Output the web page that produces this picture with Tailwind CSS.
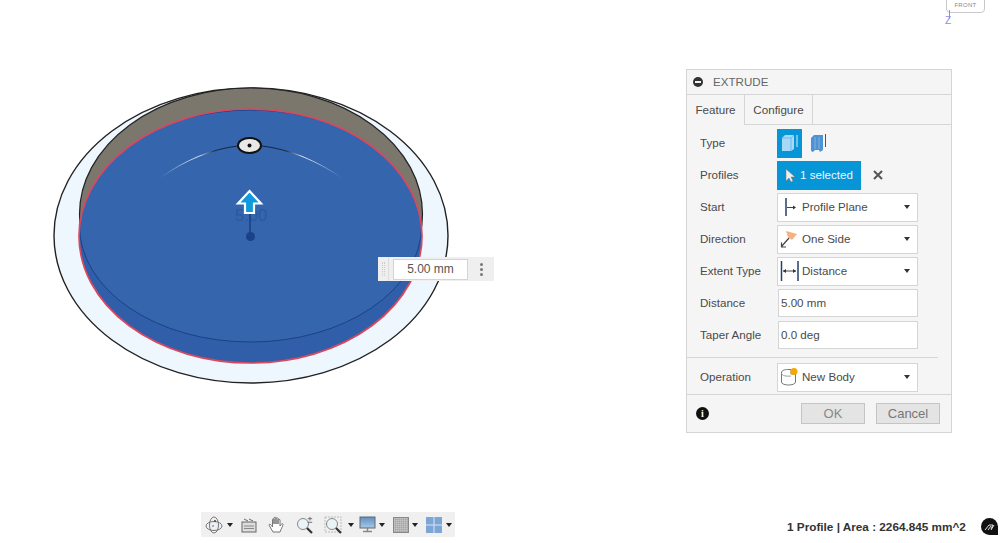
<!DOCTYPE html>
<html lang="en">
<head>
<meta charset="UTF-8">
<title>Extrude</title>
<script src="https://cdn.jsdelivr.net/npm/@tailwindcss/browser@4"></script>
</head>
<body class="bg-white">
<div class="relative w-[1000px] h-[543px] overflow-hidden bg-white font-['Liberation_Sans',Arial,sans-serif] text-[11.6px] text-[#4a4a4a]">

  <!-- model -->
  <svg class="absolute left-0 top-0" width="1000" height="543" viewBox="0 0 1000 543">
    <defs>
      <clipPath id="rim"><ellipse cx="250.5" cy="236" rx="171.5" ry="127"/></clipPath>
      <linearGradient id="fadeL" gradientUnits="userSpaceOnUse" x1="160" y1="0" x2="238" y2="0">
        <stop offset="0" stop-color="#dfe8f4" stop-opacity="0"/>
        <stop offset=".5" stop-color="#dfe8f4"/>
        <stop offset=".7" stop-color="#17263f"/>
        <stop offset="1" stop-color="#14223c"/>
      </linearGradient>
      <linearGradient id="fadeR" gradientUnits="userSpaceOnUse" x1="342" y1="0" x2="262" y2="0">
        <stop offset="0" stop-color="#dfe8f4" stop-opacity="0"/>
        <stop offset=".5" stop-color="#dfe8f4"/>
        <stop offset=".7" stop-color="#17263f"/>
        <stop offset="1" stop-color="#14223c"/>
      </linearGradient>
    </defs>
    <ellipse cx="251" cy="235.5" rx="197" ry="147.5" fill="#eef7fd" stroke="#222" stroke-width="1.4"/>
    <ellipse cx="251" cy="214" rx="171.5" ry="126" fill="#7b776d" stroke="#222" stroke-width="1.2"/>
    <ellipse cx="250.5" cy="236" rx="171.5" ry="127" fill="#305ea8"/>
    <g clip-path="url(#rim)">
      <ellipse cx="250.5" cy="226" rx="171" ry="116" fill="#3565ad" stroke="#1b4288" stroke-width="1"/>
    </g>
    <ellipse cx="250.5" cy="236" rx="171.5" ry="127" fill="none" stroke="#d9485f" stroke-width="1.7"/>
    <path d="M160 178 C185 160 212 149 238 146" fill="none" stroke="url(#fadeL)" stroke-width="1"/>
    <path d="M262 146 C288 149 316 160 342 178" fill="none" stroke="url(#fadeR)" stroke-width="1"/>
    <ellipse cx="249.5" cy="145.5" rx="11.5" ry="7.5" fill="#e8e8e6" stroke="#111" stroke-width="2"/>
    <circle cx="249.5" cy="145.5" r="2" fill="#111"/>
    <text x="235" y="221" font-size="16.5" fill="#2a5a9e" font-family="Liberation Sans">5.00</text>
    <path d="M250 212 V232" stroke="#1b4288" stroke-width="1.6"/>
    <circle cx="250.500" cy="236.500" r="4.500" fill="#1b4288"/>
    <path d="M249.500 191 L261 203.500 H254 V213 H245 V203.500 H238 Z" fill="#1199dd" stroke="#fff" stroke-width="2.200" stroke-linejoin="miter"/>
  </svg>

  <!-- view cube corner -->
  <div class="absolute left-[946px] -top-[6px] w-[39px] h-[19px] border border-[#c8c8c8] bg-white rounded-b-sm text-center text-[6px] leading-[20px] tracking-wider text-[#888]">FRONT</div>
  <div class="absolute left-[949px] top-[10px] w-px h-[9px] bg-[#8b8bf0]"></div>
  <span class="absolute left-[945px] top-[15px] text-[10px] leading-[11px] text-[#8b8bf0]">Z</span>

  <!-- value box -->
  <div class="absolute left-[378px] top-[257px] w-[116px] h-[24px] flex items-center bg-[#efefef]">
    <div class="w-[11px] h-full border-r border-[#ddd] flex flex-col justify-center items-center gap-[1px]">
      <span class="w-[3px] h-[14px] border-x border-dotted border-[#ccc]"></span>
    </div>
    <div class="ml-[4px] w-[75px] h-[21px] bg-white border border-[#d4d4d4] text-center text-[#555] text-[12px] leading-[19px]">5.00 mm</div>
    <div class="flex-1 flex flex-col items-center gap-[2px]">
      <span class="w-[3px] h-[3px] rounded-full bg-[#777]"></span>
      <span class="w-[3px] h-[3px] rounded-full bg-[#777]"></span>
      <span class="w-[3px] h-[3px] rounded-full bg-[#777]"></span>
    </div>
  </div>

  <!-- extrude dialog -->
  <div class="absolute left-[686px] top-[69px] w-[266px] h-[364px] border border-[#d5d5d5] bg-[#f5f5f5] flex flex-col">
    <div class="h-[25px] shrink-0 flex items-center gap-[10px] px-[6px] border-b border-[#d5d5d5] text-[#666]">
      <span class="w-[10px] h-[10px] rounded-full bg-[#333] flex items-center justify-center"><span class="w-[6px] h-[2px] bg-[#f5f5f5]"></span></span>
      <span>EXTRUDE</span>
    </div>
    <div class="h-[30px] shrink-0 flex border-b border-[#d5d5d5] mb-[2px]">
      <div class="w-[58px] h-[30px] bg-[#f5f5f5] border-r border-[#d5d5d5] flex items-center justify-center">Feature</div>
      <div class="w-[68px] border-r border-[#d5d5d5] flex items-center justify-center">Configure</div>
    </div>

    <div class="flex items-center h-[32px] pl-[13px]">
      <span class="w-[77px]">Type</span>
      <div class="w-[25px] h-[29px] bg-[#0696d7] flex items-center justify-center">
        <svg width="20" height="20" viewBox="0 0 20 20"><path d="M2 5 L5 2 H14 V16 L11 18 H2 Z" fill="#a6d8f7"/><path d="M11 5 H2 M11 5 L14 2 M11 5 V18" stroke="#6fb7e6" fill="none"/><path d="M17 2 V14" stroke="#d7eefa"/></svg>
      </div>
      <svg class="ml-[8px]" width="19" height="20" viewBox="0 0 19 20"><path d="M1 5 L4 2 H13 V17 L10 19 L9 17 H5 L3 19 L1 18 Z" fill="#4d93d2"/><path d="M5 4 V16 M9 4 V16" stroke="#7fb3e0"/><path d="M15.500 1 V14" stroke="#555"/></svg>
    </div>
    <div class="flex items-center h-[32px] pl-[13px]">
      <span class="w-[77px]">Profiles</span>
      <div class="w-[84px] h-[29px] bg-[#0696d7] flex items-center text-[#eaf6fc]">
        <svg class="ml-[8px] mr-[5px]" width="10" height="15" viewBox="0 0 10 15"><path d="M1 1 V13 L4 10 L6 14 L8 13 L6 9 H10 Z" fill="#eee" stroke="#777" stroke-width=".5"/></svg>
        <span>1 selected</span>
      </div>
      <svg class="ml-[12px]" width="10" height="10" viewBox="0 0 10 10"><path d="M1 1 L9 9 M9 1 L1 9" stroke="#555" stroke-width="2"/></svg>
    </div>
    <div class="flex items-center h-[32px] pl-[13px]">
      <span class="w-[77px]">Start</span>
      <div class="w-[141px] h-[29px] bg-white border border-[#d5d5d5] flex items-center">
        <svg class="ml-[5px] mr-[5px] shrink-0" width="14" height="20" viewBox="0 0 14 20"><path d="M3 1 V19" stroke="#24406b" stroke-width="1.500"/><path d="M4 10.500 H10" stroke="#444"/><path d="M10 8.500 L13 10.500 L10 12.500 Z" fill="#333"/></svg>
        <span class="flex-1">Profile Plane</span>
        <span class="mr-[7px] w-0 h-0 border-x-[3.500px] border-x-transparent border-t-[4px] border-t-[#333]"></span>
      </div>
    </div>
    <div class="flex items-center h-[32px] pl-[13px]">
      <span class="w-[77px]">Direction</span>
      <div class="w-[141px] h-[29px] bg-white border border-[#d5d5d5] flex items-center">
        <svg class="ml-[2px] mr-[4px] shrink-0" width="18" height="20" viewBox="0 0 18 20"><path d="M6 2 L17 5 L12 11 L8 8 Z" fill="#f2b285"/><path d="M9 9 L1.500 17.500 M1.500 13.500 V18 H6" stroke="#444" fill="none" stroke-width="1.200"/></svg>
        <span class="flex-1">One Side</span>
        <span class="mr-[7px] w-0 h-0 border-x-[3.500px] border-x-transparent border-t-[4px] border-t-[#333]"></span>
      </div>
    </div>
    <div class="flex items-center h-[32px] pl-[13px]">
      <span class="w-[77px]">Extent Type</span>
      <div class="w-[141px] h-[29px] bg-white border border-[#d5d5d5] flex items-center">
        <svg class="ml-[2px] mr-[3px] shrink-0" width="19" height="22" viewBox="0 0 19 22"><path d="M1.500 1 V21 M18 1 V21" stroke="#24406b" stroke-width="1.500"/><path d="M3 11 H16" stroke="#444"/><path d="M3 11 L6 9 V13 Z M16 11 L13 9 V13 Z" fill="#333"/></svg>
        <span class="flex-1">Distance</span>
        <span class="mr-[7px] w-0 h-0 border-x-[3.500px] border-x-transparent border-t-[4px] border-t-[#333]"></span>
      </div>
    </div>
    <div class="flex items-center h-[32px] pl-[13px]">
      <span class="w-[77px]">Distance</span>
      <div class="w-[140px] ml-[1px] h-[28px] bg-white border border-[#d5d5d5] flex items-center pl-[2px]">5.00 mm</div>
    </div>
    <div class="flex items-center h-[32px] pl-[13px]">
      <span class="w-[77px]">Taper Angle</span>
      <div class="w-[140px] ml-[1px] h-[28px] bg-white border border-[#d5d5d5] flex items-center pl-[2px]">0.0 deg</div>
    </div>

    <div class="mt-[6px] h-px w-[251px] bg-[#d5d5d5] shrink-0"></div>
    <div class="flex items-center h-[32px] mt-[3px] pl-[13px]">
      <span class="w-[77px]">Operation</span>
      <div class="w-[141px] h-[29px] bg-white border border-[#d5d5d5] flex items-center">
        <svg class="ml-[2px] mr-[4px] shrink-0" width="18" height="20" viewBox="0 0 18 20"><path d="M1.500 6 C1.500 2.500 6 2.500 9 2.500 H11 V7 H15.500 V15 C15.500 19 1.500 19 1.500 15 Z" fill="#fff" stroke="#777"/><path d="M1.500 6 C1.500 9 7 9.500 11 9" fill="none" stroke="#999"/><circle cx="14" cy="4.500" r="3.500" fill="#f7a800"/></svg>
        <span class="flex-1">New Body</span>
        <span class="mr-[7px] w-0 h-0 border-x-[3.500px] border-x-transparent border-t-[4px] border-t-[#333]"></span>
      </div>
    </div>

    <div class="mt-[1px] flex-1 border-t border-[#d5d5d5] flex items-center pl-[9px] pr-[11px]">
      <span class="w-[13px] h-[13px] rounded-full bg-[#111] text-white text-[10px] leading-[13px] font-bold text-center font-['Liberation_Serif',serif]">i</span>
      <div class="ml-auto w-[64px] h-[21px] bg-[#e4e4e4] border border-[#c4c4c4] flex items-center justify-center text-[13px] text-[#888]">OK</div>
      <div class="ml-[11px] w-[64px] h-[21px] bg-[#e4e4e4] border border-[#c4c4c4] flex items-center justify-center text-[13px] text-[#777]">Cancel</div>
    </div>
  </div>

  <!-- navigation bar -->
  <div class="absolute left-[201px] top-[512px] w-[254px] h-[25px] bg-[#f0f0f0] flex items-center pl-[4px]">
    <svg width="18" height="18" viewBox="0 0 18 18"><ellipse cx="9" cy="10" rx="8" ry="4.500" fill="none" stroke="#777"/><ellipse cx="9" cy="9" rx="4.500" ry="8" fill="none" stroke="#777"/><circle cx="10" cy="5" r="1" fill="#444"/><circle cx="8" cy="10" r="1" fill="#6d9ed1"/></svg>
    <span class="ml-[4px] w-0 h-0 border-x-[3px] border-x-transparent border-t-[4px] border-t-[#222]"></span>
    <svg class="ml-[8px]" width="16" height="16" viewBox="0 0 16 16"><path d="M3 2 L7 4 M8 2 L12 4" stroke="#666"/><rect x="1" y="5" width="14" height="10" fill="#ddd" stroke="#666"/><path d="M3 9 H13 M3 11.500 H13" stroke="#888"/></svg>
    <svg class="ml-[11px]" width="17" height="18" viewBox="0 0 17 18"><path d="M5 16 L1 9 C1 8 2.500 8 3.500 9.500 L4.500 11 V3.500 C4.500 2.500 6 2.500 6 3.500 V8 V2 C6 1 8 1 8 2 V8 V2.500 C8 1.500 10 1.500 10 2.500 V8 V4 C10 3 12 3 12 4 V10 C13 8 15 7 15 8.500 C14.500 11 13 13 12 16 Z" fill="#fff" stroke="#666" stroke-width=".9"/></svg>
    <svg class="ml-[11px]" width="18" height="18" viewBox="0 0 18 18"><circle cx="7" cy="8" r="5.500" fill="#eaf3f8" stroke="#888"/><path d="M11 12 L16 17" stroke="#333" stroke-width="2.200"/><path d="M13 3 H18 M15.500 1 V5 M13 7 H18" stroke="#666" transform="scale(.9)"/></svg>
    <svg class="ml-[10px]" width="18" height="18" viewBox="0 0 18 18"><rect x="1" y="1" width="16" height="15" fill="none" stroke="#bbb" stroke-dasharray="2 1"/><circle cx="8" cy="8" r="5.500" fill="#eaf3f8" stroke="#888"/><path d="M12 12 L17 17" stroke="#333" stroke-width="2.200"/></svg>
    <span class="ml-[6px] w-0 h-0 border-x-[3px] border-x-transparent border-t-[4px] border-t-[#222]"></span>
    <svg class="ml-[5px]" width="17" height="17" viewBox="0 0 17 17"><defs><linearGradient id="screen" x1="0" y1="0" x2="0" y2="1"><stop offset="0" stop-color="#5d8fc6"/><stop offset="1" stop-color="#a9c8e6"/></linearGradient></defs><rect x="1" y="1" width="15" height="11" fill="url(#screen)" stroke="#666"/><path d="M8.500 12 V15 M4 15.500 H13" stroke="#888" stroke-width="1.500"/></svg>
    <span class="ml-[3px] w-0 h-0 border-x-[3px] border-x-transparent border-t-[4px] border-t-[#222]"></span>
    <svg class="ml-[8px]" width="16" height="16" viewBox="0 0 16 16"><defs><pattern id="gridp" width="2" height="2" patternUnits="userSpaceOnUse"><rect width="2" height="2" fill="#c6c6c6"/><path d="M0 0 H2 M0 0 V2" stroke="#888" stroke-width=".6"/></pattern></defs><rect x=".5" y=".5" width="15" height="15" fill="url(#gridp)" stroke="#888"/></svg>
    <span class="ml-[3px] w-0 h-0 border-x-[3px] border-x-transparent border-t-[4px] border-t-[#222]"></span>
    <svg class="ml-[8px]" width="16" height="16" viewBox="0 0 16 16"><rect x="0" y="0" width="16" height="16" fill="#7ba6d6"/><path d="M8 0 V16 M0 8 H16" stroke="#dbe7f3" stroke-width="1"/></svg>
    <span class="ml-[4px] w-0 h-0 border-x-[3px] border-x-transparent border-t-[4px] border-t-[#222]"></span>
  </div>

  <!-- status -->
  <div class="absolute left-[787px] top-[519px] font-bold text-[11.750px] text-[#333] leading-[16px]">1 Profile | Area : 2264.845 mm^2</div>
  <div class="absolute left-[981px] top-[518px] w-[17px] h-[17px] rounded-full rounded-br-none bg-[#111] flex items-center justify-center">
    <svg width="11" height="8" viewBox="0 0 11 8"><path d="M1 7 L5 2 H9 L7 6 M4 7 L7 3 M7 7 L10 2" stroke="#ddd" fill="none"/></svg>
  </div>
</div>
</body>
</html>
